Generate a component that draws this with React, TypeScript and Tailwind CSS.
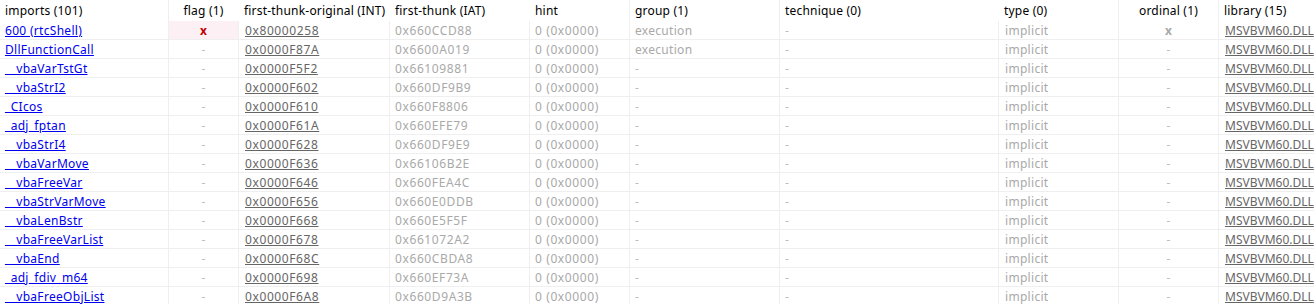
import React from "react";

type Row = {
  name: string;
  flag?: boolean;
  int: string;
  iat: string;
  group?: string;
  ordinal?: boolean;
};

const rows: Row[] = [
  { name: "600 (rtcShell)", flag: true, int: "0x80000258", iat: "0x660CCD88", group: "execution", ordinal: true },
  { name: "DllFunctionCall", int: "0x0000F87A", iat: "0x6600A019", group: "execution" },
  { name: "__vbaVarTstGt", int: "0x0000F5F2", iat: "0x66109881" },
  { name: "__vbaStrI2", int: "0x0000F602", iat: "0x660DF9B9" },
  { name: "_CIcos", int: "0x0000F610", iat: "0x660F8806" },
  { name: "_adj_fptan", int: "0x0000F61A", iat: "0x660EFE79" },
  { name: "__vbaStrI4", int: "0x0000F628", iat: "0x660DF9E9" },
  { name: "__vbaVarMove", int: "0x0000F636", iat: "0x66106B2E" },
  { name: "__vbaFreeVar", int: "0x0000F646", iat: "0x660FEA4C" },
  { name: "__vbaStrVarMove", int: "0x0000F656", iat: "0x660E0DDB" },
  { name: "__vbaLenBstr", int: "0x0000F668", iat: "0x660E5F5F" },
  { name: "__vbaFreeVarList", int: "0x0000F678", iat: "0x661072A2" },
  { name: "__vbaEnd", int: "0x0000F68C", iat: "0x660CBDA8" },
  { name: "_adj_fdiv_m64", int: "0x0000F698", iat: "0x660EF73A" },
  { name: "__vbaFreeObjList", int: "0x0000F6A8", iat: "0x660D9A3B" },
];

const headers: { label: string; center?: boolean; line?: boolean }[] = [
  { label: "imports (101)", line: true },
  { label: "flag (1)", center: true },
  { label: "first-thunk-original (INT)" },
  { label: "first-thunk (IAT)" },
  { label: "hint", line: true },
  { label: "group (1)", line: true },
  { label: "technique (0)" },
  { label: "type (0)", line: true },
  { label: "ordinal (1)", center: true, line: true },
  { label: "library (15)" },
];

const cols =
  "grid grid-cols-[169px_70px_151px_140px_100px_150px_219px_120px_100px_95px]";

const cell =
  "flex h-[19px] items-center whitespace-nowrap overflow-hidden border-b border-r border-[#efefef] pt-[1px]";
const dash = <span className="text-[#bcbcbc]">-</span>;

export default function App() {
  return (
    <div
      className="h-[304px] w-[1314px] overflow-hidden bg-white text-[12px] leading-none tracking-[0.3px]"
      style={{ fontFamily: '"Noto Sans", "Open Sans", sans-serif' }}
    >
      <div className={cols}>
        {headers.map((h) => (
          <div
            key={h.label}
            className={`flex h-[21px] items-center whitespace-nowrap border-r pt-[1px] tracking-[0.2px] text-black ${
              h.line ? "border-[#efefef]" : "border-white"
            } ${h.center ? "justify-center" : "pl-[5px]"}`}
          >
            {h.label}
          </div>
        ))}
      </div>

      {rows.map((r) => (
        <div key={r.name} className={cols}>
          <div className={`${cell} pl-[5px]`}>
            <span className="text-[#0000ee] underline">{r.name}</span>
          </div>
          <div
            className={`${cell} justify-center ${r.flag ? "bg-[#fdf0f5]" : ""}`}
          >
            {r.flag ? (
              <span className="font-bold text-[#c00000]">x</span>
            ) : (
              dash
            )}
          </div>
          <div className={`${cell} pl-[6px] tracking-[0.6px]`}>
            <span className="text-[#666666] underline">{r.int}</span>
          </div>
          <div className={`${cell} pl-[5px] tracking-[0.6px] text-[#a9a9a9]`}>
            {r.iat}
          </div>
          <div className={`${cell} pl-[5px] tracking-[0.6px] text-[#a9a9a9]`}>
            0 (0x0000)
          </div>
          <div className={`${cell} pl-[5px] text-[#a9a9a9]`}>
            {r.group ?? dash}
          </div>
          <div className={`${cell} pl-[5px]`}>{dash}</div>
          <div className={`${cell} pl-[6px] text-[#a9a9a9]`}>implicit</div>
          <div className={`${cell} justify-center`}>
            {r.ordinal ? (
              <span className="font-bold text-[#a9a9a9]">x</span>
            ) : (
              dash
            )}
          </div>
          <div className={`${cell} border-r-0 pl-[6px] tracking-normal`}>
            <span className="text-[#666666] underline">MSVBVM60.DLL</span>
          </div>
        </div>
      ))}
    </div>
  );
}
